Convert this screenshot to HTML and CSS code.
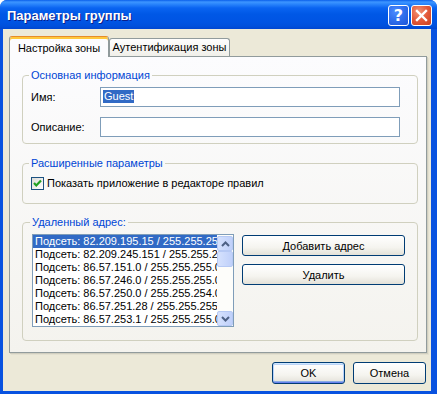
FILE: index.html
```html
<!DOCTYPE html>
<html lang="ru">
<head>
    <meta charset="UTF-8">
    <title>Параметры группы</title>
    <link rel="stylesheet" href="styles.css">
</head>
<body>
    <div class="window">
        <div class="titlebar">
            <span class="title">Параметры группы</span>
            <div class="caption-btns">
                <span class="cap-btn help">?</span>
                <span class="cap-btn close">
                    <svg width="13" height="13" viewBox="0 0 13 13"><path d="M2 2 L11 11 M11 2 L2 11" stroke="#fff" stroke-width="2.4" stroke-linecap="square"/></svg>
                </span>
            </div>
        </div>

        <div class="client">
            <div class="tabs">
                <div class="tab active">Настройка зоны</div>
                <div class="tab">Аутентификация зоны</div>
            </div>

            <div class="panel">
                <fieldset class="group group-main">
                    <legend>Основная информация</legend>
                    <div class="field-row">
                        <label class="field-label">Имя:</label>
                        <div class="input"><span class="selected-text">Guest</span></div>
                    </div>
                    <div class="field-row">
                        <label class="field-label">Описание:</label>
                        <div class="input"></div>
                    </div>
                </fieldset>

                <fieldset class="group group-extra">
                    <legend>Расширенные параметры</legend>
                    <label class="check-row">
                        <span class="checkbox">
                            <svg width="11" height="11" viewBox="0 0 11 11"><path d="M2 5 L4.3 7.5 L9 2.5" fill="none" stroke="#21A121" stroke-width="2.2"/></svg>
                        </span>
                        Показать приложение в редакторе правил
                    </label>
                </fieldset>

                <fieldset class="group group-remote">
                    <legend>Удаленный адрес:</legend>
                    <div class="remote-row">
                        <div class="listbox">
                            <ul class="list-items">
                                <li class="selected">Подсеть: 82.209.195.15 / 255.255.255.255</li>
                                <li>Подсеть: 82.209.245.151 / 255.255.255.255</li>
                                <li>Подсеть: 86.57.151.0 / 255.255.255.0</li>
                                <li>Подсеть: 86.57.246.0 / 255.255.255.0</li>
                                <li>Подсеть: 86.57.250.0 / 255.255.254.0</li>
                                <li>Подсеть: 86.57.251.28 / 255.255.255.252</li>
                                <li>Подсеть: 86.57.253.1 / 255.255.255.0</li>
                            </ul>
                            <div class="scrollbar">
                                <span class="sb-btn">
                                    <svg width="9" height="6" viewBox="0 0 9 6"><path d="M1 5 L4.5 1.5 L8 5" fill="none" stroke="#4D6185" stroke-width="2"/></svg>
                                </span>
                                <span class="sb-thumb"></span>
                                <span class="sb-track"></span>
                                <span class="sb-btn">
                                    <svg width="9" height="6" viewBox="0 0 9 6"><path d="M1 1 L4.5 4.5 L8 1" fill="none" stroke="#4D6185" stroke-width="2"/></svg>
                                </span>
                            </div>
                        </div>
                        <div class="side-buttons">
                            <button class="btn wide">Добавить адрес</button>
                            <button class="btn wide">Удалить</button>
                        </div>
                    </div>
                </fieldset>
            </div>

            <div class="footer">
                <button class="btn default">OK</button>
                <button class="btn">Отмена</button>
            </div>
        </div>
    </div>
</body>
</html>
```

FILE: styles.css
```css
body {
    margin: 0;
    background-color: #fff;
    font-family: "Liberation Sans", Tahoma, sans-serif;
    font-size: 11px;
    color: #000;
}
.window {
    width: 437px;
    height: 394px;
    display: flex;
    flex-direction: column;
    background-color: #0852E0;
    border-radius: 7px 7px 0 0;
    overflow: hidden;
}
.titlebar {
    height: 29px;
    flex-shrink: 0;
    display: flex;
    align-items: center;
    justify-content: space-between;
    padding: 0 5px 0 7px;
    background: linear-gradient(to bottom, #0A5FEA 0, #3D95FF 2px, #2B86FC 4px, #0A64F1 8px, #0058E6 14px, #0054E3 22px, #0050DC 26px, #0046D1 29px);
}
.title {
    color: #fff;
    font-weight: bold;
    font-size: 13px;
    text-shadow: 1px 1px 0 #0A1E8A;
    margin-top: 1px;
}
.caption-btns {
    display: flex;
    gap: 2px;
    margin-top: 2px;
}
.cap-btn {
    width: 19px;
    height: 19px;
    border: 1px solid #fff;
    border-radius: 3px;
    display: flex;
    align-items: center;
    justify-content: center;
    color: #fff;
}
.help {
    background: radial-gradient(circle at 35% 30%, #4D8CFF 0, #2F6EEC 50%, #1D55D8 100%);
    font-weight: bold;
    font-size: 16px;
    font-family: "DejaVu Sans", sans-serif;
}
.close {
    background: radial-gradient(circle at 35% 30%, #F29476 0, #E3593A 50%, #C9401F 100%);
}
.client {
    flex: 1;
    margin: 0 6px 3px 3px;
    background-color: #ECE9D8;
    padding: 7px 4px 0 6px;
    display: flex;
    flex-direction: column;
}
.tabs {
    display: flex;
    align-items: flex-end;
    margin-bottom: -1px;
    position: relative;
    z-index: 1;
}
.tab {
    height: 17px;
    line-height: 16px;
    width: 121px;
    box-sizing: border-box;
    text-align: center;
    border: 1px solid #919B9C;
    border-bottom: none;
    border-radius: 3px 3px 0 0;
    background: linear-gradient(to bottom, #FEFEFE, #F0EFE9);
    margin-bottom: 1px;
    height: 18px;
}
.tab.active {
    width: 100px;
    height: 21px;
    line-height: 18px;
    border-top: 1px solid #E68B2C;
    padding-top: 2px;
    box-shadow: inset 0 2px 0 #FFC83C;
    background: #FCFCFE;
    margin-bottom: 0;
}
.panel {
    height: 297px;
    box-sizing: border-box;
    border: 1px solid #919B9C;
    background: linear-gradient(to bottom, #FCFCFE, #F4F3EE);
    box-shadow: 1px 1px 0 #D0CEBF, 2px 2px 0 #E3E0D0;
    padding: 0 8px 0 12px;
}
.group {
    margin: 12px 0 0 0;
    padding: 5px 17px 6px 8px;
    border: 1px solid #D0D0BF;
    border-radius: 4px;
    min-inline-size: 0;
}
.group legend {
    color: #0046D5;
    line-height: 13px;
    padding: 0 2px;
    margin-left: -2px;
}
.field-row {
    display: flex;
    align-items: center;
    height: 20px;
}
.field-row + .field-row {
    margin-top: 10px;
}
.field-label {
    width: 69px;
}
.input {
    width: 300px;
    height: 20px;
    box-sizing: border-box;
    border: 1px solid #7F9DB9;
    background-color: #fff;
    padding: 2px 0 0 2px;
}
.selected-text {
    display: inline-block;
    background-color: #316AC5;
    color: #fff;
    line-height: 13px;
    padding: 0 1px;
}
.group-extra {
    margin-top: 13px;
    padding-top: 7px;
    padding-bottom: 13px;
}
.check-row {
    display: flex;
    align-items: center;
    line-height: 13px;
    gap: 3px;
}
.checkbox {
    width: 11px;
    height: 11px;
    border: 1px solid #1C5180;
    background: linear-gradient(135deg, #DCDCD7, #FFFFFF);
    display: flex;
}
.group-remote {
    padding: 5px 8px 13px 9px;
}
.remote-row {
    display: flex;
    gap: 8px;
}
.listbox {
    width: 202px;
    height: 93px;
    box-sizing: border-box;
    border: 1px solid #7F9DB9;
    background-color: #fff;
    display: flex;
}
.list-items {
    list-style: none;
    margin: 0;
    padding: 0;
    flex: 1;
    overflow: hidden;
}
.list-items li {
    height: 13px;
    line-height: 13px;
    padding-left: 2px;
    white-space: nowrap;
    overflow: hidden;
}
.list-items li.selected {
    background-color: #316AC5;
    color: #fff;
}
.scrollbar {
    width: 16px;
    display: flex;
    flex-direction: column;
    background-color: #FDFDFA;
    padding-top: 1px;
}
.sb-btn,
.sb-thumb {
    box-sizing: border-box;
    border: 1px solid #B6C9F4;
    border-radius: 2px;
    background: linear-gradient(to right, #D5E1FD, #BFD0FA);
    display: flex;
    align-items: center;
    justify-content: center;
}
.sb-btn {
    height: 15px;
}
.sb-thumb {
    height: 16px;
}
.sb-track {
    flex: 1;
}
.side-buttons {
    display: flex;
    flex-direction: column;
    gap: 8px;
    padding-top: 1px;
}
.btn {
    font-family: "Liberation Sans", Tahoma, sans-serif;
    font-size: 11px;
    color: #000;
    height: 22px;
    width: 73px;
    border: 1px solid #003C74;
    border-radius: 3px;
    background: linear-gradient(to bottom, #FFFFFF 0, #F5F4EF 60%, #E3E1D8 100%);
    padding: 0;
}
.btn.wide {
    width: 163px;
    height: 21px;
}
.btn.default {
    box-shadow: inset 0 1px 0 #CEE7FF, inset 0 -1px 0 #6982EE, inset 1px 0 0 #B8D2FA, inset -1px 0 0 #B8D2FA, inset 0 2px 0 #BCD4F6, inset 0 -2px 0 #89ADE4;
}
.footer {
    display: flex;
    justify-content: flex-end;
    gap: 8px;
    margin-top: 9px;
    padding-right: 1px;
}
```
